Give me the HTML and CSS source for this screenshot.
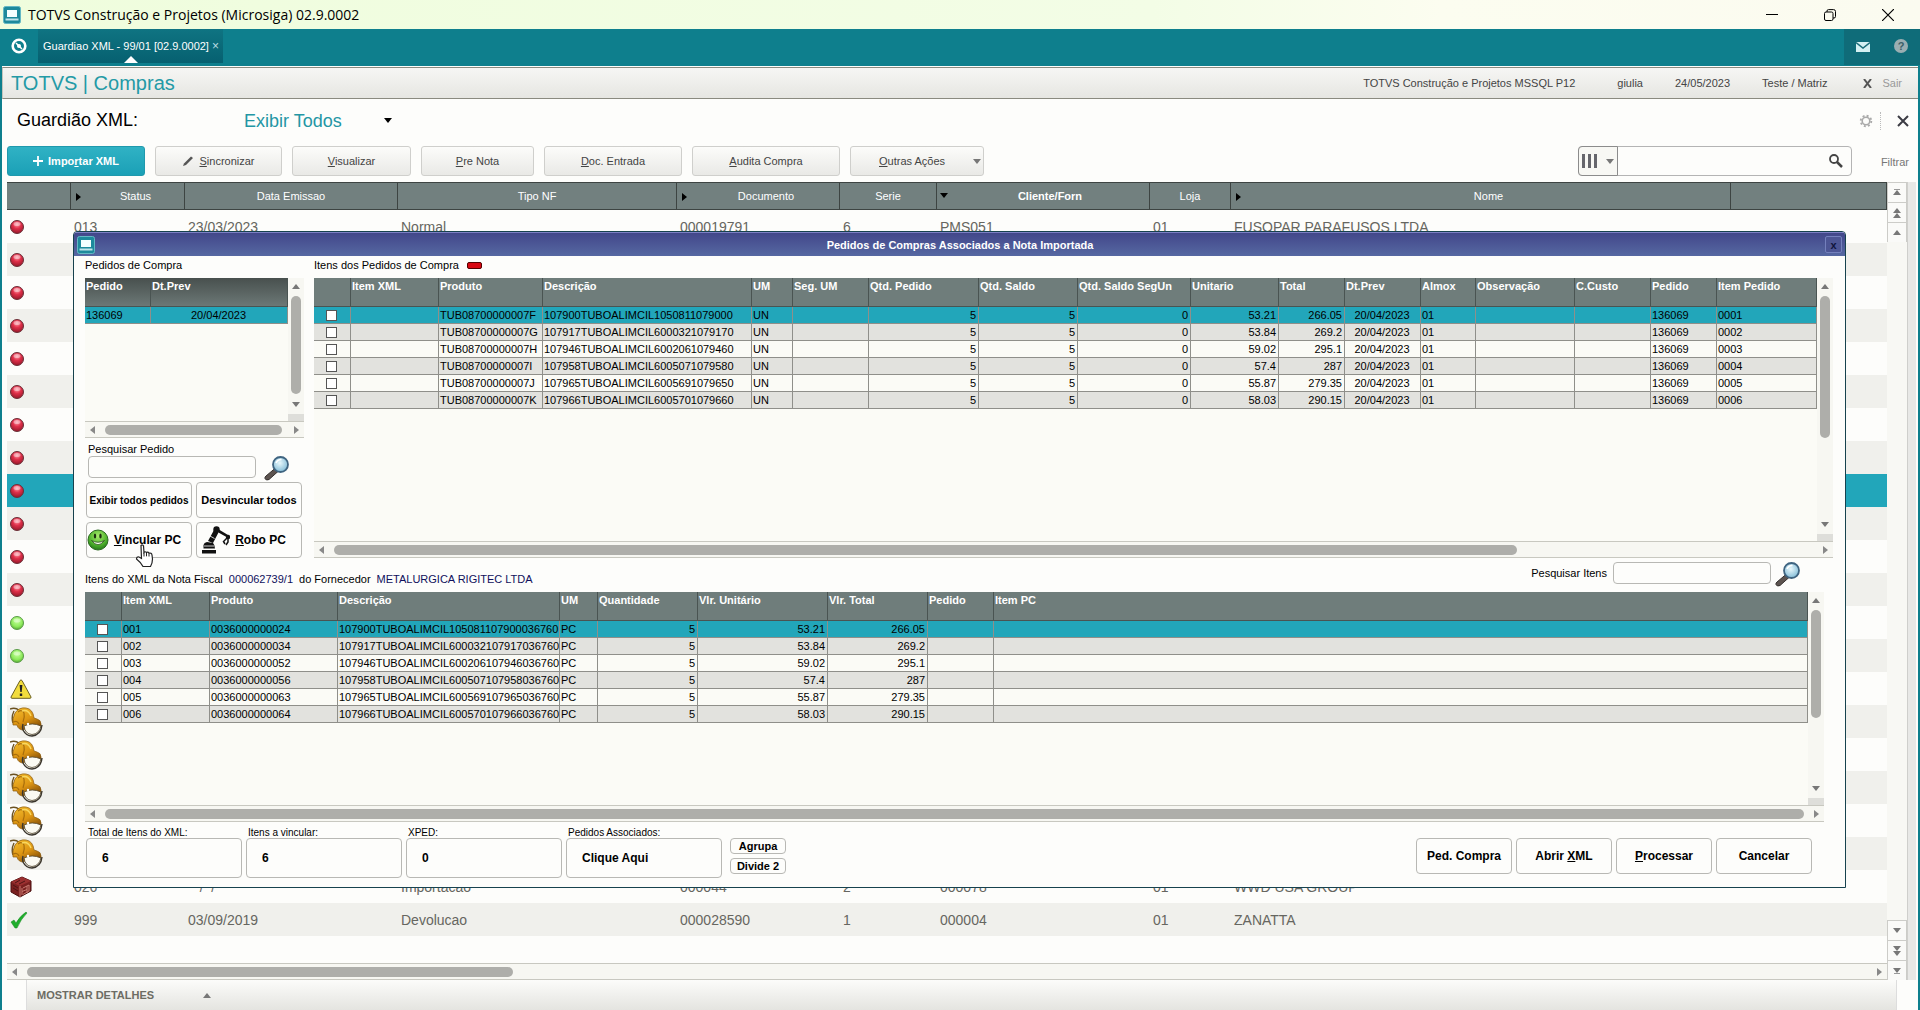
FILE: index.html
```html
<!DOCTYPE html>
<html lang="pt-BR">
<head>
  <meta charset="UTF-8" />
  <meta name="viewport" content="width=device-width, initial-scale=1" />
  <title>TOTVS Construção e Projetos (Microsiga) 02.9.0002</title>
  <link rel="stylesheet" href="styles.css">
</head>
<body>

  <!-- icon sprites -->
  <svg class="sprites" aria-hidden="true">
    <defs>
      <radialGradient id="g-red" cx="50%" cy="30%" r="70%">
        <stop offset="0" stop-color="#ff9aa6" />
        <stop offset="0.45" stop-color="#e0304a" />
        <stop offset="1" stop-color="#96182a" />
      </radialGradient>
      <radialGradient id="g-green" cx="50%" cy="35%" r="70%">
        <stop offset="0" stop-color="#c4ff9c" />
        <stop offset="0.6" stop-color="#8eea5c" />
        <stop offset="1" stop-color="#4ea02c" />
      </radialGradient>
      <radialGradient id="g-smile" cx="50%" cy="30%" r="75%">
        <stop offset="0" stop-color="#a8ec6c" />
        <stop offset="0.6" stop-color="#4fb32c" />
        <stop offset="1" stop-color="#1d6b14" />
      </radialGradient>
      <linearGradient id="g-helmet" x1="0" y1="0" x2="0.6" y2="1">
        <stop offset="0" stop-color="#f5c030" />
        <stop offset="0.6" stop-color="#dc9412" />
        <stop offset="1" stop-color="#8a5408" />
      </linearGradient>
      <radialGradient id="g-lens" cx="45%" cy="40%" r="65%">
        <stop offset="0" stop-color="#e8f8fc" />
        <stop offset="1" stop-color="#7cb8d4" />
      </radialGradient>
    </defs>
    <symbol id="ball-red" viewBox="0 0 14 14">
      <circle cx="7" cy="7" r="6.5" fill="url(#g-red)" stroke="#6a3038" />
      <ellipse cx="7" cy="4" rx="3.5" ry="2" fill="#fff" opacity="0.4" />
    </symbol>
    <symbol id="ball-green" viewBox="0 0 14 14">
      <circle cx="7" cy="7" r="6.5" fill="url(#g-green)" stroke="#5a9a48" />
      <ellipse cx="7" cy="4.5" rx="3.5" ry="2" fill="#fff" opacity="0.4" />
    </symbol>
    <symbol id="warning" viewBox="0 0 22 20">
      <path d="M10 1.5 Q11 .3 12 1.5 L21 18 Q21.300 19.200 20 19.300 H2 Q.700 19.200 1 18 Z" fill="#f2dc3c" stroke="#6b6020" />
      <path d="M9.600 6 h2.800 l-.700 7 h-1.400 z M9.800 14.500 h2.400 v2.400 h-2.400 z" fill="#222" />
    </symbol>
    <symbol id="helmet" viewBox="0 0 33 30">
      <path d="M0 2 Q5 0 9 3 M4 4 Q1 10 3 16" fill="none" stroke="#6b5222" stroke-width="1.400" />
      <path d="M5 6 Q9 0 16 1 Q23 2 24 11 L27 12 Q31 13 31 17 L31 20 Q24 16 17 18 L14 23 Q8 23 7 18 L3 18 Q2 12 5 6 Z" fill="url(#g-helmet)" stroke="#8a5a10" stroke-width="0.700" />
      <path d="M8 5 Q12 2 14 6 Q15 10 13 15 M3 15 Q7 13 9 17" fill="none" stroke="#a86e0c" stroke-width="1.200" />
      <path d="M12 4 Q18 2 21 9" fill="none" stroke="#f8d860" stroke-width="1.500" />
      <path d="M13 17 Q12 20 13 23 Q16 29 22 29 Q31 28 32 18" fill="none" stroke="#3a352c" stroke-width="1.400" />
      <path d="M14 19 Q22 15 31 19 Q29 27 22 27.500 Q15 27 14 19 Z" fill="#fbfaf2" stroke="#4c4026" stroke-width="0.800" />
      <circle cx="18" cy="17" r="1.200" fill="#fff" />
    </symbol>
    <symbol id="crate" viewBox="0 0 22 22">
      <path d="M1 6 L12 1 L21 5 V15 L10 21 L1 16 Z" fill="#7a2020" stroke="#4a1010" />
      <path d="M1 6 L12 1 L21 5 L10 10 Z" fill="#9a3030" />
      <path d="M10 10 V21 M12 12 v7 M12 15.500 l5 -2 M17 10 v7 M13 12 l6 -3 v6 l-6 3.500" fill="none" stroke="#c87a70" />
      <path d="M3 9 l5 3 M3 12 l5 3 M5 7 l5 -3 M9 8 l6 -3" fill="none" stroke="#4f1414" />
    </symbol>
    <symbol id="check" viewBox="0 0 18 18">
      <path d="M1 11 L4 9 L6 12 Q10 5 16 1 L17 2 Q11 8 7 17 H5 Z" fill="#1fae2c" stroke="#14861e" stroke-width="0.500" />
    </symbol>
    <symbol id="monitor" viewBox="0 0 18 18">
      <rect x="0.500" y="0.500" width="17" height="17" rx="2" fill="#1d8a9c" stroke="#63b8c4" />
      <rect x="4" y="4" width="10" height="7" fill="#f4ffff" />
      <path d="M2.500 12.500 h13 v2 h-13 z" fill="#bfe4ea" />
    </symbol>
    <symbol id="magnifier" viewBox="0 0 26 25">
      <path d="M11.500 12 L14.500 15 L5 23.500 Q2 25 1 22.500 Q.600 21 2 20 Z" fill="#5d5450" stroke="#35302e" />
      <circle cx="16.500" cy="8.500" r="7.500" fill="url(#g-lens)" stroke="#3f6480" stroke-width="1.800" />
      <path d="M12 7 Q13.500 3.500 17.500 3.500" fill="none" stroke="#fff" stroke-width="1.600" />
    </symbol>
  </svg>

  <header class="window-bar">
    <svg class="app-icon"><use href="#monitor" /></svg>
    <h1 class="window-title">TOTVS Construção e Projetos (Microsiga) 02.9.0002</h1>
    <div class="window-buttons">
      <button type="button" aria-label="Minimizar"><svg width="12" height="12" viewBox="0 0 12 12"><path d="M0 5.500 H12" stroke="#000" /></svg></button>
      <button type="button" aria-label="Restaurar"><svg width="12" height="12" viewBox="0 0 12 12" fill="none" stroke="#000"><rect x="0.500" y="3" width="8.500" height="8.500" rx="1.500" /><path d="M3 3 V2 Q3 .600 4.500 .600 H9.500 Q11.500 .600 11.500 2.500 V7.500 Q11.500 9 10 9 H9" /></svg></button>
      <button type="button" aria-label="Fechar"><svg width="12" height="12" viewBox="0 0 12 12"><path d="M0 0 L12 12 M12 0 L0 12" stroke="#000" stroke-width="1.200" /></svg></button>
    </div>
  </header>

  <nav class="tab-bar">
    <button type="button" class="home-button" aria-label="Início">
      <svg width="16" height="16" viewBox="0 0 16 16"><circle cx="8" cy="8" r="6.300" fill="none" stroke="#fff" stroke-width="2.600" /><path d="M5 5 l6 6" stroke="#fff" stroke-width="1.500" /><circle cx="8" cy="8" r="2" fill="#fff" /></svg>
    </button>
    <a href="#" class="tab">Guardiao XML - 99/01 [02.9.0002] <span class="tab-close">×</span></a>
    <div class="tab-tools">
      <button type="button" aria-label="Mensagens"><svg width="14" height="10" viewBox="0 0 14 10"><rect width="14" height="10" fill="#d4f0f2" /><path d="M0 .500 L7 6 L14 .500" fill="none" stroke="#1a6c78" stroke-width="1.400" /></svg></button>
      <button type="button" class="help-button" aria-label="Ajuda">?</button>
    </div>
  </nav>

  <main class="workspace">
    <div class="module-bar">
      <h2 class="module-name">TOTVS | Compras</h2>
      <span>TOTVS Construção e Projetos MSSQL P12</span>
      <span class="user">giulia</span>
      <span>24/05/2023</span>
      <span>Teste / Matriz</span>
      <a href="#" class="exit"><svg width="9" height="9" viewBox="0 0 9 9"><path d="M1 0 L8 9 M8 0 L1 9" stroke="#555" stroke-width="2" /></svg>Sair</a>
    </div>

    <div class="page-head">
      <label for="view" class="page-title">Guardião XML:</label>
      <div class="view-picker">
        <select id="view"><option>Exibir Todos</option></select>
        <i class="arrow down"></i>
      </div>
      <div class="page-tools">
        <button type="button" class="gear" aria-label="Configurar"><svg width="14" height="14" viewBox="0 0 14 14"><circle cx="7" cy="7" r="3.800" fill="none" stroke="#aaa" stroke-width="1.600" /><circle cx="7" cy="7" r="5.300" fill="none" stroke="#aaa" stroke-width="1.800" stroke-dasharray="2 2.160" /></svg></button>
        <button type="button" aria-label="Fechar rotina"><svg width="12" height="12" viewBox="0 0 12 12"><path d="M1 1 L11 11 M11 1 L1 11" stroke="#3c3c44" stroke-width="2" /></svg></button>
      </div>
    </div>

    <div class="toolbar">
      <button type="button" class="tool primary w-138"><svg width="10" height="10" viewBox="0 0 10 10"><path d="M5 0 V10 M0 5 H10" stroke="#fff" stroke-width="1.800" /></svg> <span>Impo<u>r</u>tar XML</span></button>
      <button type="button" class="tool w-127"><svg width="12" height="11" viewBox="0 0 12 11"><path d="M1 10 L2 7.500 L9 .500 L11 2 L4 9 Z" fill="#555" /></svg> <span><u>S</u>incronizar</span></button>
      <button type="button" class="tool w-119"><span><u>V</u>isualizar</span></button>
      <button type="button" class="tool w-113"><span><u>P</u>re Nota</span></button>
      <button type="button" class="tool w-138"><span><u>D</u>oc. Entrada</span></button>
      <button type="button" class="tool w-148"><span><u>A</u>udita Compra</span></button>
      <button type="button" class="tool split w-134"><span><u>O</u>utras Ações</span><i class="arrow down"></i></button>
      <div class="search">
        <button type="button" class="search-cols" aria-label="Colunas"><svg width="16" height="14" viewBox="0 0 16 14"><path d="M1.500 0 V14 M7.500 0 V14 M13.500 0 V14" stroke="#66666c" stroke-width="3" /></svg><i class="arrow down"></i></button>
        <input type="text" aria-label="Pesquisar" />
        <button type="button" class="search-go" aria-label="Buscar"><svg width="14" height="14" viewBox="0 0 14 14"><circle cx="5" cy="5" r="4" fill="none" stroke="#444" stroke-width="1.800" /><path d="M8 8 L13 13" stroke="#444" stroke-width="2.500" /></svg></button>
      </div>
      <a href="#" class="filter">Filtrar</a>
    </div>

    <div class="browse">
      <div class="browse-rows">
        <table class="notes">
          <colgroup>
            <col class="c-64"><col class="c-114"><col class="c-213"><col class="c-279"><col class="c-163"><col class="c-97"><col class="c-213"><col class="c-81"><col class="c-500"><col>
          </colgroup>
          <thead>
            <tr>
              <th></th><th class="marked">Status</th><th>Data Emissao</th><th>Tipo NF</th><th class="marked">Documento</th><th>Serie</th><th class="marked sorted">Cliente/Forn</th><th>Loja</th><th class="marked">Nome</th><th></th>
            </tr>
          </thead>
          <tbody>
            <tr><td><svg class="ball"><use href="#ball-red" /></svg></td><td>013</td><td>23/03/2023</td><td>Normal</td><td>000019791</td><td>6</td><td>PMS051</td><td>01</td><td>FUSOPAR PARAFUSOS LTDA</td><td></td></tr>
            <tr><td><svg class="ball"><use href="#ball-red" /></svg></td><td colspan="9"></td></tr>
            <tr><td><svg class="ball"><use href="#ball-red" /></svg></td><td colspan="9"></td></tr>
            <tr><td><svg class="ball"><use href="#ball-red" /></svg></td><td colspan="9"></td></tr>
            <tr><td><svg class="ball"><use href="#ball-red" /></svg></td><td colspan="9"></td></tr>
            <tr><td><svg class="ball"><use href="#ball-red" /></svg></td><td colspan="9"></td></tr>
            <tr><td><svg class="ball"><use href="#ball-red" /></svg></td><td colspan="9"></td></tr>
            <tr><td><svg class="ball"><use href="#ball-red" /></svg></td><td colspan="9"></td></tr>
            <tr class="selected"><td><svg class="ball"><use href="#ball-red" /></svg></td><td colspan="9"></td></tr>
            <tr><td><svg class="ball"><use href="#ball-red" /></svg></td><td colspan="9"></td></tr>
            <tr><td><svg class="ball"><use href="#ball-red" /></svg></td><td colspan="9"></td></tr>
            <tr><td><svg class="ball"><use href="#ball-red" /></svg></td><td colspan="9"></td></tr>
            <tr><td><svg class="ball"><use href="#ball-green" /></svg></td><td colspan="9"></td></tr>
            <tr><td><svg class="ball"><use href="#ball-green" /></svg></td><td colspan="9"></td></tr>
            <tr><td><svg class="sign"><use href="#warning" /></svg></td><td colspan="9"></td></tr>
            <tr><td><svg class="helmet"><use href="#helmet" /></svg></td><td colspan="9"></td></tr>
            <tr><td><svg class="helmet"><use href="#helmet" /></svg></td><td colspan="9"></td></tr>
            <tr><td><svg class="helmet"><use href="#helmet" /></svg></td><td colspan="9"></td></tr>
            <tr><td><svg class="helmet"><use href="#helmet" /></svg></td><td colspan="9"></td></tr>
            <tr><td><svg class="helmet"><use href="#helmet" /></svg></td><td colspan="9"></td></tr>
            <tr><td><svg class="sign"><use href="#crate" /></svg></td><td>026</td><td>&nbsp; &nbsp;/ &nbsp;/</td><td>Importacao</td><td>000044</td><td>2</td><td>000078</td><td>01</td><td>WWD USA GROUP</td><td></td></tr>
            <tr><td><svg class="tick"><use href="#check" /></svg></td><td>999</td><td>03/09/2019</td><td>Devolucao</td><td>000028590</td><td>1</td><td>000004</td><td>01</td><td>ZANATTA</td><td></td></tr>
          </tbody>
        </table>
        <div class="bar-h browse-h" aria-hidden="true"><i class="arrow left"></i><div class="rail"><div class="thumb" style="width: 26.4%"></div></div><i class="arrow right"></i></div>
      </div>
      <div class="browse-nav">
        <button type="button" class="edge-top" aria-label="Primeiro"><i class="arrow up"></i></button>
        <button type="button" class="double" aria-label="Página anterior"><i class="arrow up"></i><i class="arrow up"></i></button>
        <button type="button" aria-label="Anterior"><i class="arrow up"></i></button>
        <button type="button" class="push" aria-label="Próximo"><i class="arrow down"></i></button>
        <button type="button" class="double" aria-label="Próxima página"><i class="arrow down"></i><i class="arrow down"></i></button>
        <button type="button" class="edge-bottom" aria-label="Último"><i class="arrow down"></i></button>
      </div>
      <div class="browse-edge"></div>
    </div>

    <button type="button" class="details">MOSTRAR DETALHES <i class="arrow up"></i></button>
  </main>

  <section class="dialog" role="dialog" aria-labelledby="dialog-title">
    <header class="dialog-bar">
      <svg class="dialog-icon"><use href="#monitor" /></svg>
      <h2 id="dialog-title">Pedidos de Compras Associados a Nota Importada</h2>
      <button type="button" class="dialog-close" aria-label="Fechar">x</button>
    </header>

    <div class="dialog-body">
      <div class="orders">
        <div class="orders-side">
          <h3 class="caption">Pedidos de Compra</h3>
          <div class="pane pane-small">
            <div class="pane-view">
              <table class="sheet dark">
                <colgroup><col class="c-66"><col></colgroup>
                <thead><tr><th>Pedido</th><th>Dt.Prev</th></tr></thead>
                <tbody><tr class="selected"><td>136069</td><td class="mid">20/04/2023</td></tr></tbody>
              </table>
            </div>
            <div class="bar-v" aria-hidden="true"><i class="arrow up"></i><div class="rail"><div class="thumb" style="height: 99%"></div></div><i class="arrow down"></i><span class="grip"></span></div>
            <div class="bar-h" aria-hidden="true"><i class="arrow left"></i><div class="rail"><div class="thumb" style="width: 99%"></div></div><i class="arrow right"></i></div>
          </div>
          <div class="order-search">
            <label for="find-order">Pesquisar Pedido</label>
            <input type="text" id="find-order" />
            <button type="button" class="lens" aria-label="Pesquisar pedido"><svg><use href="#magnifier" /></svg></button>
          </div>
          <div class="order-actions">
            <button type="button" class="btn small">Exibir todos pedidos</button>
            <button type="button" class="btn medium">Desvincular todos</button>
            <button type="button" class="btn link-pc">
              <svg width="22" height="22" viewBox="0 0 22 22"><circle cx="11" cy="11" r="10" fill="url(#g-smile)" stroke="#2c6a20" /><ellipse cx="8" cy="7" rx="1.200" ry="2.500" fill="#1c3010" /><ellipse cx="13.500" cy="7" rx="1.200" ry="2.500" fill="#1c3010" /><path d="M4.500 11.500 Q11 20 17.500 11.500 Q11 15 4.500 11.500 Z" fill="#f4ffe8" stroke="#2a4a1a" stroke-width="0.800" /></svg>
              <span><u>V</u>incular PC</span>
              <svg class="pointer" viewBox="0 0 19 24"><path d="M6 1.500 Q7.500 .300 8.500 1.800 L9 8.500 Q10 7 11.500 8.500 Q13 7.500 14 9.200 Q16.500 8.500 17 11 L17.500 15 Q17.500 19 15.500 22.500 H8 Q6 18.500 1.500 15 Q1.500 12.500 4 13 L6.500 14.500 Z" fill="#fff" stroke="#222" stroke-width="1.200" /><path d="M9 8.500 v4 M11.500 8.800 v3.500 M14 9.500 v3" stroke="#222" fill="none" /></svg>
            </button>
            <button type="button" class="btn">
              <svg width="28" height="28" viewBox="0 0 28 28"><path d="M0 24 H14 V27.500 H0 Z M1.500 22.500 V19 Q2 16.500 5 16 L11 17 Q13 19 13 22.500 Z M6 15 L12 4 L16.500 6.500 L11 17 Z" fill="#111" /><circle cx="14.500" cy="3.500" r="3.200" fill="#111" /><path d="M16 3 L26 9 L24.500 11 L15.500 6 Z" fill="#111" /><circle cx="26" cy="11" r="2.200" fill="#111" /><path d="M25 12 L21.500 15.500 L23 18 M26 13 L26 16 L24 19" fill="none" stroke="#111" stroke-width="1.500" /><path d="M8 10 L12.500 12.500 M2 20 h10" stroke="#fff" stroke-width="0.800" /></svg>
              <span><u>R</u>obo PC</span>
            </button>
          </div>
        </div>

        <div class="orders-main">
          <h3 class="caption">Itens dos Pedidos de Compra <i class="minus"></i></h3>
          <div class="pane">
            <div class="pane-view">
              <table class="sheet">
                <colgroup>
                  <col class="c-37"><col class="c-88"><col class="c-104"><col class="c-209"><col class="c-41"><col class="c-76"><col class="c-110"><col class="c-99"><col class="c-113"><col class="c-88"><col class="c-66"><col class="c-76"><col class="c-55"><col class="c-99"><col class="c-76"><col class="c-66"><col>
                </colgroup>
                <thead>
                  <tr><th></th><th>Item XML</th><th>Produto</th><th>Descrição</th><th>UM</th><th>Seg. UM</th><th>Qtd. Pedido</th><th>Qtd. Saldo</th><th>Qtd. Saldo SegUn</th><th>Unitario</th><th>Total</th><th>Dt.Prev</th><th>Almox</th><th>Observação</th><th>C.Custo</th><th>Pedido</th><th>Item Pedido</th></tr>
                </thead>
                <tbody>
                  <tr class="selected"><td class="pick"><input type="checkbox" aria-label="Item 0001"></td><td></td><td>TUB08700000007F</td><td>107900TUBOALIMCIL1050811079000</td><td>UN</td><td></td><td class="num">5</td><td class="num">5</td><td class="num">0</td><td class="num">53.21</td><td class="num">266.05</td><td class="mid">20/04/2023</td><td>01</td><td></td><td></td><td>136069</td><td>0001</td></tr>
                  <tr><td class="pick"><input type="checkbox" aria-label="Item 0002"></td><td></td><td>TUB08700000007G</td><td>107917TUBOALIMCIL6000321079170</td><td>UN</td><td></td><td class="num">5</td><td class="num">5</td><td class="num">0</td><td class="num">53.84</td><td class="num">269.2</td><td class="mid">20/04/2023</td><td>01</td><td></td><td></td><td>136069</td><td>0002</td></tr>
                  <tr><td class="pick"><input type="checkbox" aria-label="Item 0003"></td><td></td><td>TUB08700000007H</td><td>107946TUBOALIMCIL6002061079460</td><td>UN</td><td></td><td class="num">5</td><td class="num">5</td><td class="num">0</td><td class="num">59.02</td><td class="num">295.1</td><td class="mid">20/04/2023</td><td>01</td><td></td><td></td><td>136069</td><td>0003</td></tr>
                  <tr><td class="pick"><input type="checkbox" aria-label="Item 0004"></td><td></td><td>TUB08700000007I</td><td>107958TUBOALIMCIL6005071079580</td><td>UN</td><td></td><td class="num">5</td><td class="num">5</td><td class="num">0</td><td class="num">57.4</td><td class="num">287</td><td class="mid">20/04/2023</td><td>01</td><td></td><td></td><td>136069</td><td>0004</td></tr>
                  <tr><td class="pick"><input type="checkbox" aria-label="Item 0005"></td><td></td><td>TUB08700000007J</td><td>107965TUBOALIMCIL6005691079650</td><td>UN</td><td></td><td class="num">5</td><td class="num">5</td><td class="num">0</td><td class="num">55.87</td><td class="num">279.35</td><td class="mid">20/04/2023</td><td>01</td><td></td><td></td><td>136069</td><td>0005</td></tr>
                  <tr><td class="pick"><input type="checkbox" aria-label="Item 0006"></td><td></td><td>TUB08700000007K</td><td>107966TUBOALIMCIL6005701079660</td><td>UN</td><td></td><td class="num">5</td><td class="num">5</td><td class="num">0</td><td class="num">58.03</td><td class="num">290.15</td><td class="mid">20/04/2023</td><td>01</td><td></td><td></td><td>136069</td><td>0006</td></tr>
                </tbody>
              </table>
            </div>
            <div class="bar-v" aria-hidden="true"><i class="arrow up"></i><div class="rail"><div class="thumb" style="height: 65%"></div></div><i class="arrow down"></i><span class="grip"></span></div>
            <div class="bar-h" aria-hidden="true"><i class="arrow left"></i><div class="rail"><div class="thumb" style="width: 80%"></div></div><i class="arrow right"></i></div>
          </div>
        </div>
      </div>

      <div class="invoice-head">
        <span>Itens do XML da Nota Fiscal</span>
        <span class="ref">000062739/1</span>
        <span>do Fornecedor</span>
        <span class="ref">METALURGICA RIGITEC LTDA</span>
        <div class="item-search">
          <label for="find-item">Pesquisar Itens</label>
          <input type="text" id="find-item" />
          <button type="button" class="lens" aria-label="Pesquisar itens"><svg><use href="#magnifier" /></svg></button>
        </div>
      </div>

      <div class="pane pane-wide">
        <div class="pane-view">
          <table class="sheet">
            <colgroup>
              <col class="c-37"><col class="c-88"><col class="c-128"><col class="c-222"><col class="c-38"><col class="c-100"><col class="c-130"><col class="c-100"><col class="c-66"><col>
            </colgroup>
            <thead>
              <tr><th></th><th>Item XML</th><th>Produto</th><th>Descrição</th><th>UM</th><th>Quantidade</th><th>Vlr. Unitário</th><th>Vlr. Total</th><th>Pedido</th><th>Item PC</th></tr>
            </thead>
            <tbody>
              <tr class="selected"><td class="pick"><input type="checkbox" aria-label="Item 001"></td><td>001</td><td>0036000000024</td><td class="full">107900TUBOALIMCIL105081107900036760</td><td>PC</td><td class="num">5</td><td class="num">53.21</td><td class="num">266.05</td><td></td><td></td></tr>
              <tr><td class="pick"><input type="checkbox" aria-label="Item 002"></td><td>002</td><td>0036000000034</td><td class="full">107917TUBOALIMCIL600032107917036760</td><td>PC</td><td class="num">5</td><td class="num">53.84</td><td class="num">269.2</td><td></td><td></td></tr>
              <tr><td class="pick"><input type="checkbox" aria-label="Item 003"></td><td>003</td><td>0036000000052</td><td class="full">107946TUBOALIMCIL600206107946036760</td><td>PC</td><td class="num">5</td><td class="num">59.02</td><td class="num">295.1</td><td></td><td></td></tr>
              <tr><td class="pick"><input type="checkbox" aria-label="Item 004"></td><td>004</td><td>0036000000056</td><td class="full">107958TUBOALIMCIL600507107958036760</td><td>PC</td><td class="num">5</td><td class="num">57.4</td><td class="num">287</td><td></td><td></td></tr>
              <tr><td class="pick"><input type="checkbox" aria-label="Item 005"></td><td>005</td><td>0036000000063</td><td class="full">107965TUBOALIMCIL600569107965036760</td><td>PC</td><td class="num">5</td><td class="num">55.87</td><td class="num">279.35</td><td></td><td></td></tr>
              <tr><td class="pick"><input type="checkbox" aria-label="Item 006"></td><td>006</td><td>0036000000064</td><td class="full">107966TUBOALIMCIL600570107966036760</td><td>PC</td><td class="num">5</td><td class="num">58.03</td><td class="num">290.15</td><td></td><td></td></tr>
            </tbody>
          </table>
        </div>
        <div class="bar-v" aria-hidden="true"><i class="arrow up"></i><div class="rail"><div class="thumb" style="height: 64%"></div></div><i class="arrow down"></i><span class="grip"></span></div>
        <div class="bar-h" aria-hidden="true"><i class="arrow left"></i><div class="rail"><div class="thumb" style="width: 100%"></div></div><i class="arrow right"></i></div>
      </div>

      <div class="totals">
        <div class="total"><label for="total-items">Total de Itens do XML:</label><button type="button" class="btn value" id="total-items">6</button></div>
        <div class="total"><label for="to-link">Itens a vincular:</label><button type="button" class="btn value" id="to-link">6</button></div>
        <div class="total"><label for="xped">XPED:</label><button type="button" class="btn value" id="xped">0</button></div>
        <div class="total"><label for="linked">Pedidos Associados:</label><button type="button" class="btn value" id="linked">Clique Aqui</button></div>
        <div class="group-actions">
          <button type="button" class="btn mini">Agrupa</button>
          <button type="button" class="btn mini">Divide 2</button>
        </div>
        <div class="dialog-actions">
          <button type="button" class="btn">Ped. Compra</button>
          <button type="button" class="btn"><span>Abrir <u>X</u>ML</span></button>
          <button type="button" class="btn"><span><u>P</u>rocessar</span></button>
          <button type="button" class="btn">Cancelar</button>
        </div>
      </div>
    </div>
  </section>

</body>
</html>
```

FILE: styles.css
```css
* {
  box-sizing: border-box;
}
body {
  margin: 0;
  height: 100vh;
  display: flex;
  flex-direction: column;
  overflow: hidden;
  position: relative;
  background: #fdfdfb;
  color: #000;
  font-family: "Liberation Sans", Arial, sans-serif;
  font-size: 11px;
}
h1, h2, h3 {
  margin: 0;
  font-weight: normal;
}
button, input, select {
  font-family: inherit;
  font-size: inherit;
  margin: 0;
  padding: 0;
  border: 0;
  background: none;
  color: inherit;
}
a {
  color: inherit;
  text-decoration: none;
}
svg {
  display: block;
  flex: none;
}
.sprites {
  position: absolute;
  width: 0;
  height: 0;
}

/* small triangles used by menus and scrollbars */
.arrow {
  flex: none;
  width: 0;
  height: 0;
  border: 4px solid transparent;
}
.arrow.up {
  border-top: 0;
  border-bottom: 5px solid #777;
}
.arrow.down {
  border-bottom: 0;
  border-top: 5px solid #777;
}
.arrow.left {
  border-left: 0;
  border-right: 5px solid #888;
}
.arrow.right {
  border-right: 0;
  border-left: 5px solid #888;
}

/* window bar */
.window-bar {
  height: 29px;
  flex: none;
  display: flex;
  align-items: center;
  padding-left: 3px;
  background: linear-gradient(90deg, #effddd, #f3fde6 60%, #fcfdf0 75%, #fbfbf0);
}
.app-icon {
  width: 18px;
  height: 18px;
}
.window-title {
  margin-left: 7px;
  font-family: "Open Sans", "Noto Sans", sans-serif;
  font-size: 14px;
}
.window-buttons {
  margin-left: auto;
  display: flex;
  padding-right: 3px;
}
.window-buttons button {
  width: 58px;
  display: flex;
  justify-content: center;
}

/* tab bar */
.tab-bar {
  height: 37px;
  flex: none;
  display: flex;
  align-items: flex-start;
  background: #0e7f8d;
  color: #fff;
}
.home-button {
  width: 38px;
  height: 34px;
  display: flex;
  align-items: center;
  justify-content: center;
}
.tab {
  height: 34px;
  padding: 0 4px 0 5px;
  line-height: 34px;
  background: linear-gradient(#0f7482, #066070);
  position: relative;
}
.tab::after {
  content: "";
  position: absolute;
  left: 50%;
  bottom: 0;
  margin-left: -7px;
  border: 7px solid transparent;
  border-top: 0;
  border-bottom: 7px solid #fff;
}
.tab-close {
  font-size: 12px;
  color: #b8dde2;
}
.tab-tools {
  margin-left: auto;
  display: flex;
  background: #0f6c79;
}
.tab-tools button {
  width: 38px;
  height: 36px;
  display: flex;
  align-items: center;
  justify-content: center;
}
.tab-tools .help-button {
  width: 14px;
  height: 14px;
  margin: 10px 12px;
  border-radius: 50%;
  background: #9aaeb2;
  color: #3c6068;
  font-weight: bold;
}

/* workspace */
.workspace {
  flex: 1;
  min-height: 0;
  display: flex;
  flex-direction: column;
  border: 2px solid #0e7f8d;
  border-width: 0 2px;
  padding-top: 1px;
}
.module-bar {
  height: 32px;
  flex: none;
  display: flex;
  align-items: center;
  gap: 32px;
  padding: 0 16px 0 8px;
  border: 1px solid #8a8a80;
  border-left-color: #c4c4bc;
  border-right: 0;
  background: linear-gradient(#f6f6f4, #e6e6e2);
  color: #444;
}
.module-name {
  margin-right: auto;
  font-size: 20px;
  color: #239aa6;
}
.user {
  margin-left: 10px;
}
.exit {
  display: flex;
  align-items: center;
  gap: 10px;
  margin-left: 4px;
  color: #999;
}
.page-head {
  height: 47px;
  flex: none;
  display: flex;
  align-items: center;
  padding: 0 9px 4px 15px;
}
.page-title {
  width: 227px;
  font-size: 18px;
}
.view-picker {
  width: 148px;
  display: grid;
  align-items: center;
}
.view-picker select {
  grid-area: 1 / 1;
  appearance: none;
  font-size: 18px;
  color: #2396a4;
}
.view-picker .arrow {
  grid-area: 1 / 1;
  justify-self: end;
  border-top-color: #000;
}
.page-tools {
  margin-left: auto;
  display: flex;
  align-items: center;
  gap: 16px;
}
.page-tools .gear {
  padding: 2px 7px 2px 0;
  border-right: 1px dotted #bbb;
}

/* toolbar */
.toolbar {
  flex: none;
  display: flex;
  gap: 10px;
  padding: 0 9px 4px 5px;
}
.tool {
  height: 30px;
  display: flex;
  align-items: center;
  justify-content: center;
  gap: 5px;
  border: 1px solid #cfcfcc;
  border-radius: 3px;
  background: linear-gradient(#fcfcfa, #e9e9e6);
  color: #444;
}
.tool.primary {
  border-color: #2099ad;
  background: linear-gradient(#30b2c4, #1ba0b6);
  color: #fff;
  font-weight: bold;
}
.tool.split {
  padding-right: 2px;
  padding-left: 28px;
  justify-content: space-between;
}
.w-113 { width: 113px; }
.w-119 { width: 119px; }
.w-127 { width: 127px; }
.w-134 { width: 134px; }
.w-138 { width: 138px; }
.w-148 { width: 148px; }
.search {
  margin-left: auto;
  width: 274px;
  height: 30px;
  display: flex;
  border: 1px solid #b4b4b4;
  border-radius: 4px;
}
.search-cols {
  width: 40px;
  display: flex;
  align-items: center;
  justify-content: center;
  gap: 8px;
  border: 1px solid #8c8c8c;
  border-radius: 4px 0 0 4px;
  margin: -1px 0 -1px -1px;
  background: #f8f8f4;
}
.search input {
  flex: 1;
  min-width: 0;
}
.search-go {
  width: 30px;
  display: flex;
  align-items: center;
  justify-content: center;
}
.filter {
  width: 47px;
  line-height: 32px;
  text-align: right;
  color: #777;
}

/* notes list */
.browse {
  flex: 1;
  min-height: 0;
  display: flex;
  padding: 0 2px 0 5px;
}
.browse-rows {
  flex: 1;
  min-width: 0;
  display: flex;
  flex-direction: column;
}
table {
  width: 100%;
  table-layout: fixed;
  border-collapse: separate;
  border-spacing: 0;
}
th, td {
  padding: 0;
  overflow: hidden;
  white-space: nowrap;
}
.notes th {
  height: 28px;
  border: 1px solid #3d4442;
  border-width: 1px 1px 1px 0;
  background: #72807f;
  color: #fff;
  font-weight: normal;
}
.notes th.marked::before {
  content: "";
  float: left;
  margin: 3px 6px 0 5px;
  border: 4px solid transparent;
  border-right: 0;
  border-left: 5px solid #000;
}
.notes th.sorted {
  font-weight: bold;
}
.notes th.sorted::before {
  margin: 3px 3px 0 3px;
  border: 4px solid transparent;
  border-bottom: 0;
  border-top: 5px solid #000;
}
.notes td {
  height: 33px;
  padding-left: 3px;
  color: #666660;
  font-size: 14px;
}
.notes tr:nth-child(even) td {
  background: #f0f0ec;
}
.notes tr.selected td {
  background: #22a6ba;
}
.ball {
  width: 14px;
  height: 14px;
}
.sign {
  width: 22px;
  height: 22px;
}
.helmet {
  width: 33px;
  height: 30px;
}
.tick {
  width: 18px;
  height: 18px;
}
.browse-nav {
  width: 20px;
  display: flex;
  flex-direction: column;
  background: #f8f8f4;
}
.browse-nav button {
  height: 20px;
  display: flex;
  flex-direction: column;
  align-items: center;
  justify-content: center;
  border: 1px solid #ccccc8;
  border-bottom: 0;
  background: #fafaf8;
}
.browse-nav .push {
  margin-top: auto;
}
.edge-top .arrow {
  box-shadow: 0 -2px 0 -1px #999;
}
.edge-bottom .arrow {
  box-shadow: 0 2px 0 -1px #999;
}
.browse-edge {
  width: 9px;
  background: #e8e8e6;
  border-left: 1px solid #cfcfcc;
}
.details {
  height: 30px;
  flex: none;
  display: flex;
  align-items: center;
  gap: 49px;
  margin: 0 21px 0 24px;
  padding-left: 10px;
  border: 1px solid #ddd;
  border-width: 0 1px;
  background: linear-gradient(#fcfcfa, #e4e4e0);
  color: #6c6c64;
  font-weight: bold;
}

/* scrollbars */
.bar-h {
  height: 17px;
  display: flex;
  align-items: center;
  gap: 10px;
  padding: 0 5px;
  border: 1px solid #c8c8c0;
  border-width: 1px 0;
  background: #f7f7f2;
}
.browse-h {
  margin-top: auto;
}
.bar-v {
  display: flex;
  flex-direction: column;
  align-items: center;
  gap: 7px;
  padding-top: 6px;
  background: #f7f7f2;
}
.rail {
  flex: 1;
}
.thumb {
  border-radius: 5px;
  background: #aeaeaa;
}
.bar-h .thumb {
  height: 10px;
}
.bar-v .thumb {
  width: 10px;
}
.grip {
  width: 16px;
  height: 7px;
  background: #dededa;
}

/* dialog window over the list */
.dialog {
  position: absolute;
  top: 231px;
  left: 73px;
  right: 74px;
  border: 1px solid #17424e;
  border-radius: 4px 4px 0 0;
  background: #fdfdfb;
  overflow: hidden;
}
.dialog-bar {
  height: 24px;
  display: flex;
  align-items: center;
  justify-content: space-between;
  padding: 0 3px;
  border-top: 1px solid #7c80c4;
  background: linear-gradient(#42478a, #5668a2);
  color: #fff;
}
.dialog-bar h2 {
  font-size: 11px;
  font-weight: bold;
}
.dialog-icon {
  width: 18px;
  height: 18px;
}
.dialog-close {
  width: 17px;
  height: 17px;
  border: 1px solid #7480bc;
  border-radius: 2px;
  background: #4c5594;
  color: #10143c;
  font-weight: bold;
  line-height: 12px;
}
.dialog-body {
  padding: 0 12px 9px 11px;
}
.caption {
  height: 22px;
  display: flex;
  align-items: center;
  gap: 8px;
  font-size: 11px;
  line-height: 20px;
  padding-bottom: 4px;
}
.minus {
  width: 15px;
  height: 7px;
  border: 1px solid #500;
  border-radius: 2px;
  background: #d80812;
}
.orders {
  display: flex;
  gap: 10px;
}
.orders-side {
  width: 219px;
}
.orders-main {
  flex: 1;
  min-width: 0;
  display: flex;
  flex-direction: column;
}

/* grid pane: table, vertical bar, horizontal bar */
.pane {
  flex: 1;
  display: grid;
  grid-template-columns: minmax(0, 1fr) 16px;
  grid-template-rows: 1fr 17px;
  background: #fbfbf6;
}
.pane .bar-h {
  grid-column: 1 / 3;
}
.pane-small {
  height: 160px;
}
.pane-wide {
  height: 230px;
  margin-right: 9px;
}
.sheet th {
  height: 29px;
  padding: 2px 0 0 1px;
  border: 1px solid #4a5452;
  border-width: 0 1px 1px 0;
  background: #6f7d7b;
  color: #fff;
  text-align: left;
  vertical-align: top;
  line-height: 13px;
}
.sheet.dark th {
  background: linear-gradient(#48504e, #6c7876);
}
.sheet td {
  height: 17px;
  padding: 0 2px 0 1px;
  border: 1px solid #8f8f8a;
  border-width: 0 1px 1px 0;
  line-height: 14px;
}
.sheet td.full {
  padding-right: 0;
}
.sheet tr:nth-child(even) td {
  background: #e2e2de;
}
.sheet tr.selected td {
  background: #22a6ba;
}
.sheet .num {
  text-align: right;
}
.sheet .mid,
.sheet .pick {
  text-align: center;
}
.sheet input[type="checkbox"] {
  appearance: none;
  display: block;
  width: 11px;
  height: 11px;
  margin: 0 auto;
  border: 1px solid #555;
  background: #fff;
}

.c-37 { width: 37px; }
.c-38 { width: 38px; }
.c-41 { width: 41px; }
.c-55 { width: 55px; }
.c-64 { width: 64px; }
.c-66 { width: 66px; }
.c-76 { width: 76px; }
.c-81 { width: 81px; }
.c-88 { width: 88px; }
.c-97 { width: 97px; }
.c-99 { width: 99px; }
.c-100 { width: 100px; }
.c-104 { width: 104px; }
.c-110 { width: 110px; }
.c-113 { width: 113px; }
.c-114 { width: 114px; }
.c-128 { width: 128px; }
.c-130 { width: 130px; }
.c-163 { width: 163px; }
.c-209 { width: 209px; }
.c-213 { width: 213px; }
.c-222 { width: 222px; }
.c-279 { width: 279px; }
.c-500 { width: 500px; }

/* search fields and buttons */
.order-search {
  display: grid;
  grid-template-columns: 168px 26px;
  column-gap: 8px;
  padding: 5px 0 4px 3px;
}
.order-search label {
  grid-column: 1 / 3;
  line-height: 13px;
}
.order-search input,
.item-search input {
  height: 22px;
  border: 1px solid #b8b8b4;
  border-radius: 4px;
}
.item-search input {
  width: 158px;
  margin-left: 2px;
}
.lens {
  height: 22px;
}
.lens svg {
  width: 26px;
  height: 25px;
}
.order-actions {
  display: grid;
  grid-template-columns: 106px 106px;
  gap: 4px;
  padding-left: 1px;
}
.btn {
  position: relative;
  height: 36px;
  display: flex;
  align-items: center;
  justify-content: center;
  gap: 5px;
  border: 1px solid #b8b8b4;
  border-radius: 4px;
  font-size: 12px;
  font-weight: bold;
  white-space: nowrap;
}
.btn.small {
  font-size: 10px;
}
.btn.medium {
  font-size: 11px;
}
.order-actions svg + span {
  margin-right: 10px;
}
.pointer {
  position: absolute;
  left: 48px;
  top: 21px;
  width: 19px;
  height: 24px;
  z-index: 1;
}

.invoice-head {
  height: 34px;
  display: flex;
  align-items: center;
  gap: 6px;
  padding-right: 32px;
}
.invoice-head > span {
  padding-top: 8px;
}
.ref {
  color: #10105c;
}
.item-search {
  margin-left: auto;
  display: flex;
  align-items: center;
  gap: 4px;
  padding-bottom: 4px;
}

/* bottom row */
.totals {
  display: flex;
  align-items: flex-start;
  gap: 4px;
  padding: 5px 21px 0 1px;
}
.total {
  width: 156px;
}
.total label {
  display: block;
  height: 11px;
  padding-left: 2px;
  font-size: 10px;
  line-height: 11px;
}
.btn.value {
  width: 100%;
  height: 40px;
  justify-content: flex-start;
  padding-left: 15px;
}
.group-actions {
  display: grid;
  gap: 4px;
  padding: 11px 0 0 4px;
}
.btn.mini {
  width: 56px;
  height: 16px;
  font-size: 11px;
}
.dialog-actions {
  margin-left: auto;
  display: flex;
  gap: 4px;
  padding-top: 11px;
}
.dialog-actions .btn {
  width: 96px;
}
```
